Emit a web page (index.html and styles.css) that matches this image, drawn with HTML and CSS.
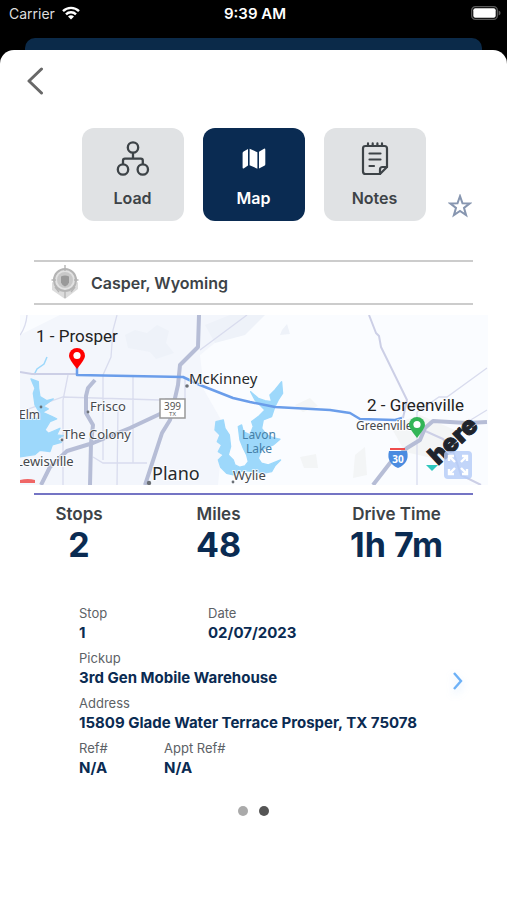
FILE: index.html
```html
<!doctype html>
<html lang="en">
<head>
  <meta charset="utf-8">
  <meta name="viewport" content="width=device-width, initial-scale=1">
  <title>Load Map</title>
  <link rel="stylesheet" href="styles.css">
</head>
<body>
  <header class="status-bar">
    <div class="carrier">
      <span>Carrier</span>
      <svg width="18" height="14" viewBox="0 0 18 14" fill="none" stroke="#fff" stroke-width="2.4">
        <path d="M1 5.2a11.4 11.4 0 0 1 16 0"/>
        <path d="M4 8.4a7 7 0 0 1 10 0"/>
        <path d="M9 13.6L6 10.6a4.3 4.3 0 0 1 6 0z" fill="#fff" stroke="none"/>
      </svg>
    </div>
    <div class="clock">9:39 AM</div>
    <svg class="battery" width="30" height="14" viewBox="0 0 30 14">
      <rect x="0.7" y="0.7" width="25.6" height="12.6" rx="3.6" fill="none" stroke="#5a5a5a" stroke-width="1.3"/>
      <rect x="2.3" y="2.3" width="22.4" height="9.4" rx="2" fill="#fff"/>
      <path d="M27.6 4.6q2 .8 2 2.4t-2 2.4z" fill="#5a5a5a"/>
    </svg>
  </header>
  <div class="behind"></div>

  <main class="sheet">
    <button class="back" aria-label="Back">
      <svg width="18" height="28" viewBox="0 0 18 28" fill="none" stroke="#686868" stroke-width="3" stroke-linecap="round" stroke-linejoin="round"><path d="M15.500 2L3 14l12.500 12"/></svg>
    </button>

    <nav class="tabs">
      <div class="tab-list">
        <button class="tab">
          <svg width="34" height="36" viewBox="0 0 34 36" fill="none" stroke="#3d4347" stroke-width="2.3">
            <circle cx="17" cy="6.500" r="5.200"/>
            <circle cx="7" cy="28.500" r="5.200"/>
            <circle cx="26.800" cy="28.500" r="5.200"/>
            <path d="M17 11.700v6M7 23.300v-3.600q0-2 2-2h15.800q2 0 2 2v3.600"/>
          </svg>
          <span>Load</span>
        </button>
        <button class="tab active">
          <svg width="34" height="36" viewBox="0 0 34 36" fill="#fff">
            <path d="M5.600 12q0-1 1-1.500L11 8v16.500l-4 2.800q-1.400.8-1.400-.8z"/>
            <path d="M12.600 7.800l7.800 3.400v16.500l-7.800-3.400z"/>
            <path d="M22 10.800l4.600-2.900q1.700-.9 1.700.8v14.600q0 1-1 1.500L22 27.500z"/>
          </svg>
          <span>Map</span>
        </button>
        <button class="tab">
          <svg width="34" height="36" viewBox="0 0 34 36" fill="none" stroke="#3d4347" stroke-width="2.2" stroke-linecap="round" stroke-linejoin="round">
            <path d="M7.500 5h19q2.500 0 2.500 2.500v18.500l-7 7H7.500Q5 33 5 30.500v-23Q5 5 7.500 5z"/>
            <path d="M22 33v-4.500q0-2.500 2.500-2.500H29M10 2.400V5M14.700 2.400V5M19.400 2.400V5M24 2.400V5M11.500 12.500h11M11.500 18.500h11M11.500 25h4.500"/>
          </svg>
          <span>Notes</span>
        </button>
      </div>
      <button class="favorite" aria-label="Favorite">
        <svg width="24" height="24" viewBox="0 0 24 24" fill="none" stroke="#8796b0" stroke-width="2"><path d="M12 2.200l2.500 7.100 7.300.1-5.800 4.500 2.100 7.200L12 16.900l-6.100 4.200L8 13.900 2.200 9.400l7.300-.1z"/></svg>
      </button>
    </nav>

    <div class="location">
      <svg width="30" height="36" viewBox="0 0 30 36">
        <path d="M2 17l4 2 9 5 9-5 4-2v7L15 34 2 25z" fill="#dcdcdc"/>
        <circle cx="15" cy="15" r="11" fill="#e2e2e2" stroke="#b4b4b4" stroke-width="2"/>
        <circle cx="15" cy="15" r="8" fill="#c8c8c8"/>
        <path d="M11 11.500q4-2 8 0v6q-1 3-4 4-3-1-4-4z" fill="#999"/>
        <path d="M15 0v6M1.500 15H6M24 15h4.500M15 25v8M5 22l4 5M25 22l-4 5" stroke="#b4b4b4" stroke-width="1.400" fill="none"/>
      </svg>
      <span>Casper, Wyoming</span>
    </div>

    <div class="map">
      <svg class="map-canvas" viewBox="0 0 468 170" role="img" aria-label="Route from Prosper to Greenville">
        <rect width="468" height="170" fill="#fafcff"/>
        <path d="M0 20L40 0h170l-8 22-22 18 4 35 20 35-6 60H0z" fill="#f3f6fc"/>
        <path d="M105 20l10-5 12 3 10-8 12 6-3 12 8 10-18 6-6-7-22-4zM185 10l25-10h35l-20 20-30 8zM262 15l5-6 3 10-10 1z" fill="#eef2f9"/>
        <path d="M275 90l15-7 8 8-15 6zM280 142l16-3 2 14h-14zM335 140l10-8 2 28-14 3zM370 110l30-10 35 15-5 32-45-10z" fill="#f3f5f6"/>

        <!-- minor roads -->
        <g fill="none" stroke="#d9dcee" stroke-width="1.300">
          <path d="M7 0q-1 12-7 20M97 0l-4 15-2 27-8 18v85M48 60l-5 25v85M113 61v87M98 92l-1 78M0 97l43-15 97 3M73 142l10 6h44M227 0l-47 35"/>
          <path d="M467 53l-40 29h-8l-22 15v73M467 95l-18 11M165 64v20h-20"/>
        </g>
        <!-- lakes -->
        <g fill="#9dd8fb" stroke="#9dd8fb" stroke-width="4" stroke-linejoin="round">
          <path transform="translate(0 40) scale(.333)" d="M0 195L55 190l5-15-15-25-5-35 5-15-12-28 22 8 1 20 4 25 20 12 20-5-30 22 15 8-17 10 27 12 15 8-20 8-15 25 10 10 35-15-10 20 20 2-18 10 12 10-27 8-7 20-30-4-15 13-45 7z"/>
          <path transform="translate(180 65) scale(.333)" d="M48 125l22-5 5 25 13 20 4 35-7 25 15 15 5 15 15 7 15-4 10-13-5-20-10-20-10-25-5-40 10-5 5 20 20 10 10-25-5-15 20-15 20-20-30-30-13-25 23 20 20 7 20 3-5-20 15-15 20-25 3 35-13 20-10 20-10 30-25 10-5 25 15 20 25 10 15 3-20 17-35 15-10 25 10 15 20 5 37-15-17 18-10 17-25 5-25-5-35-3-30 13-20-5-18-18-7-22 15-15-15-10 10-20-13-10 8-20-15-15z"/>
        </g>
        <path d="M14 60l3-6 7-5 3-7" fill="none" stroke="#9dd8fb" stroke-width="1.500"/>
        <!-- highways -->
        <g fill="none" stroke="#b6bdd6" stroke-linejoin="round">
          <path stroke-width="2" stroke="#cccfe6" d="M349 0l7 18 3 3 2 11 26 53-4 18M0 57l12 2h45M403 115l20 9 10 12 8 24 20 10"/>
          <path stroke-width="4" d="M75 65l-7 8-2 8v17l7 12-2 18-1 42M142 98l-32 15-37 15-26 8-17 16-9 18M179 0l-1 32-18 18-2 20-8 35-8 13-17 52"/>
          <path stroke-width="4" d="M467 107l-20 1-34-2-8 7-5 12-13 8-17 15-17 22"/>
        </g>
        <path d="M57 45v15l106 2 17 8 33 13 17 4 25 5 55 3 20 3 10 6 35 1 7-2" fill="none" stroke="#6a9dea" stroke-width="2.500" stroke-linejoin="round"/>

        <!-- road shields -->
        <rect x="140" y="84" width="25" height="19" fill="#fff" stroke="#999" stroke-width="1.500"/>
        <text x="152.500" y="95" class="shield-text">399</text>
        <text x="152.500" y="101" class="shield-state">TX</text>
        <path d="M370 133h15v2h-15z" fill="#ef4d4d"/>
        <path d="M369 136h18q3 12-9 17-12-5-9-17z" fill="#4a8be0"/>
        <text x="378" y="148" class="interstate">30</text>
        <path d="M0 165q8-2 15 0v3H0z" fill="#ef6666"/>

        <!-- towns -->
        <g fill="#6b7076">
          <circle cx="167" cy="71" r="1.800"/><circle cx="68" cy="97" r="1.400"/><circle cx="42" cy="125" r="1.400"/>
          <circle cx="129" cy="168" r="2.200"/><circle cx="213" cy="167" r="1.400"/><circle cx="21" cy="92" r="1.400"/>
        </g>
        <g class="towns">
          <text x="169" y="69" class="town-big">McKinney</text>
          <text x="132" y="165" class="city">Plano</text>
          <text x="70" y="96">Frisco</text>
          <text x="43" y="124">The Colony</text>
          <text x="-1" y="104" class="town-small">Elm</text>
          <text x="-4" y="151">Lewisville</text>
          <text x="213" y="165">Wylie</text>
          <text x="336" y="115" class="town-small">Greenville</text>
          <g class="water">
            <text x="239" y="124">Lavon</text>
            <text x="239" y="138">Lake</text>
          </g>
        </g>

        <!-- stops -->
        <path d="M57 54Q49 44 49 41a8 8 0 0 1 16 0q0 3-8 13z" fill="#f00"/>
        <circle cx="57" cy="40.500" r="3.600" fill="#fff"/>
        <path d="M397 123q-8-10-8-13a8 8 0 0 1 16 0q0 3-8 13z" fill="#32b556"/>
        <circle cx="397" cy="109.500" r="3.600" fill="#fff"/>
        <text x="16" y="27" class="stop-name">1 - Prosper</text>
        <text x="347" y="96" class="stop-name">2 - Greenville</text>

        <path d="M406 150h12l-6 6z" fill="#2fc7bd"/>
        <text class="brand" transform="translate(418 151) rotate(-43)">here</text>
      </svg>
      <button class="expand" aria-label="Expand map">
        <svg width="22" height="22" viewBox="0 0 22 22" fill="none" stroke="#fff" stroke-width="2.400"><path d="M2 7V2h5M2 2l6 6M15 2h5v5M20 2l-6 6M2 15v5h5M2 20l6-6M15 20h5v-5M20 20l-6-6"/></svg>
      </button>
    </div>

    <dl class="stats">
      <div><dt>Stops</dt><dd>2</dd></div>
      <div><dt>Miles</dt><dd>48</dd></div>
      <div><dt>Drive Time</dt><dd>1h 7m</dd></div>
    </dl>

    <section class="stop">
      <dl class="stop-details">
        <div class="row wide">
          <div><dt>Stop</dt><dd>1</dd></div>
          <div><dt>Date</dt><dd>02/07/2023</dd></div>
        </div>
        <div class="row">
          <div><dt>Pickup</dt><dd>3rd Gen Mobile Warehouse</dd></div>
        </div>
        <div class="row">
          <div><dt>Address</dt><dd>15809 Glade Water Terrace Prosper, TX 75078</dd></div>
        </div>
        <div class="row narrow">
          <div><dt>Ref#</dt><dd>N/A</dd></div>
          <div><dt>Appt Ref#</dt><dd>N/A</dd></div>
        </div>
      </dl>
      <button class="next" aria-label="Next stop">
        <svg width="12" height="20" viewBox="0 0 12 20" fill="none" stroke="#6db1f7" stroke-width="2.400"><path d="M2 2l7 8-7 8"/></svg>
      </button>
    </section>

    <div class="dots">
      <button class="dot" aria-label="Page 1"></button>
      <button class="dot current" aria-label="Page 2"></button>
    </div>
  </main>
</body>
</html>
```
FILE: styles.css
```css
* {
  margin: 0;
  padding: 0;
  box-sizing: border-box;
}

body {
  min-height: 100vh;
  display: flex;
  flex-direction: column;
  background: #000;
  font-family: Inter, "Liberation Sans", sans-serif;
  color: #3d4347;
}

button {
  border: none;
  background: none;
  font-family: inherit;
  color: inherit;
  cursor: pointer;
}

svg {
  display: block;
}

.status-bar {
  display: grid;
  grid-template-columns: 1fr auto 1fr;
  align-items: center;
  height: 26px;
  padding: 0 6px 0 9px;
  margin-bottom: 12px;
  color: #fff;
  font-size: 14px;
}

.carrier {
  display: flex;
  align-items: center;
  gap: 7px;
  color: #ddd;
}

.clock {
  font-size: 15px;
  font-weight: 600;
}

.battery {
  justify-self: end;
}

/* card peeking out behind the sheet */
.behind {
  height: 12px;
  margin: 0 25px;
  border-radius: 10px 10px 0 0;
  background: #0b2a49;
}

.sheet {
  flex: 1;
  background: #fff;
  border-radius: 14px 14px 0 0;
  padding-top: 16px;
}

.back {
  display: block;
  margin-left: 25px;
  padding: 1px;
}

.tabs {
  display: grid;
  grid-template-columns: 1fr auto 1fr;
  align-items: end;
  margin-top: 32px;
}

.tab-list {
  grid-column: 2;
  display: flex;
  gap: 19px;
}

.tab {
  display: flex;
  flex-direction: column;
  align-items: center;
  gap: 11px;
  width: 102px;
  height: 93px;
  padding-top: 13px;
  border-radius: 12px;
  background: #e0e2e4;
  font-size: 16px;
  line-height: 20px;
  font-weight: 600;
}

.tab.active {
  background: #0a2b52;
  color: #fff;
}

.favorite {
  justify-self: start;
  margin: 0 0 3px 22px;
}

.location {
  display: flex;
  align-items: center;
  gap: 11px;
  height: 45px;
  margin: 39px 34px 10px;
  padding-left: 16px;
  border: solid #ccc;
  border-width: 2px 0;
  font-size: 16px;
  font-weight: 600;
}

.map {
  position: relative;
  margin: 0 19px 0 20px;
}

.map-canvas {
  width: 100%;
  font-family: "Noto Sans", sans-serif;
}

.towns {
  font-size: 13px;
  fill: #45494e;
  stroke: #fff;
  stroke-width: 2px;
  stroke-opacity: 0.7;
  paint-order: stroke;
}

.town-big {
  font-size: 15px;
  fill: #26292c;
}

.town-small {
  font-size: 12px;
}

.city {
  font-size: 18px;
  fill: #26292c;
}

.water {
  font-size: 12px;
  fill: #4580a8;
  stroke: none;
  text-anchor: middle;
}

.stop-name {
  font-family: Roboto, sans-serif;
  font-size: 17px;
  fill: #222;
}

.shield-text {
  font-size: 10px;
  text-anchor: middle;
  fill: #555;
}

.shield-state {
  font-size: 6px;
  text-anchor: middle;
  fill: #555;
}

.interstate {
  font-size: 10px;
  font-weight: 700;
  text-anchor: middle;
  fill: #fff;
}

.brand {
  font-family: Inter, sans-serif;
  font-size: 25px;
  font-weight: 900;
  fill: #20242c;
  stroke: #20242c;
  stroke-width: 1px;
}

.expand {
  position: absolute;
  right: 16px;
  bottom: 6px;
  padding: 3px;
  border-radius: 4px;
  background: rgba(180, 203, 247, 0.8);
}

.stats {
  display: grid;
  grid-template-columns: 90fr 189fr 167fr;
  margin: 8px 27px 0 34px;
  padding-top: 10px;
  position: relative;
  text-align: center;
}

.stats::before {
  content: "";
  position: absolute;
  top: 0;
  left: 0;
  right: 7px;
  height: 2px;
  background: #7474c4;
}

.stats dt {
  font-size: 17px;
  line-height: 22px;
  font-weight: 600;
}

.stats dd {
  font-size: 34px;
  line-height: 40px;
  font-weight: 700;
  color: #0a2b52;
}

.stop {
  display: flex;
  align-items: center;
  justify-content: space-between;
  margin: 38px 43px 0 79px;
}

.stop-details {
  display: flex;
  flex-direction: column;
  gap: 5px;
}

.row {
  display: grid;
}

.wide {
  grid-template-columns: 129px 1fr;
}

.narrow {
  grid-template-columns: 85px 1fr;
}

.stop-details dt {
  font-size: 13px;
  line-height: 20px;
  color: #5c6166;
}

.stop-details dd {
  font-size: 15px;
  line-height: 20px;
  font-weight: 700;
  color: #0a2b52;
}

.next {
  padding-bottom: 20px;
  filter: drop-shadow(0 4px 4px rgba(109, 177, 247, 0.3));
}

.dots {
  display: flex;
  justify-content: center;
  gap: 11px;
  margin-top: 28px;
}

.dot {
  width: 10px;
  height: 10px;
  border-radius: 50%;
  background: #aaa;
}

.dot.current {
  background: #555;
}
```
